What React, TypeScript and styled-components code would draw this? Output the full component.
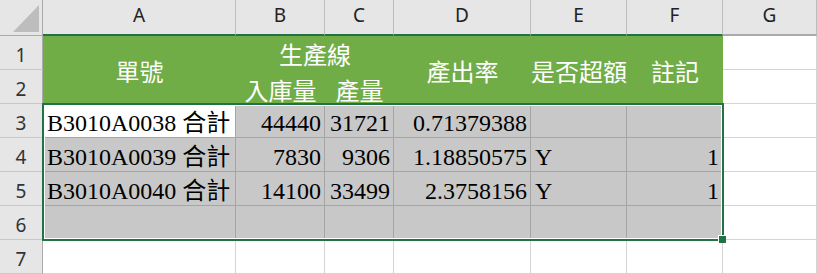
import React from 'react'
import styled, { createGlobalStyle } from 'styled-components'

const GREEN = '#70ad47'
const DARK = '#217346'
const GRID = '#d4d4d4'
const SHADE = '#c8c8c8'
const SHADE_LINE = '#a5a5a5'
const HEAD_BG = '#e6e6e6'

const GlobalStyle = createGlobalStyle`
  html, body {
    margin: 0;
    padding: 0;
    background: #fff;
    overflow: hidden;
  }
`

const Sheet = styled.div`
  display: grid;
  grid-template-columns: 43px 193px 89px 69px 137px 96px 96px 1fr;
  grid-template-rows: 36px repeat(7, 34px);
  width: 817px;
  height: 274px;
  overflow: hidden;
  font-family: "Liberation Serif", "Noto Sans CJK TC", serif;
`

const Corner = styled.div`
  grid-column: 1;
  grid-row: 1;
  box-sizing: border-box;
  background: ${HEAD_BG};
  border-right: 1px solid #ababab;
  border-bottom: 1px solid #ababab;
`

const ColHead = styled.div<{ $c: number; $sel?: boolean }>`
  grid-column: ${p => p.$c};
  grid-row: 1;
  box-sizing: border-box;
  display: flex;
  align-items: center;
  justify-content: center;
  padding-bottom: 4px;
  background: ${HEAD_BG};
  border-right: 1px solid #bdbdbd;
  border-bottom: ${p => (p.$sel ? `2px solid ${DARK}` : '2px solid #ababab')};
  font-family: "Noto Sans", "Open Sans", sans-serif;
  font-size: 19px;
  color: #222;
`

const RowHead = styled.div<{ $r: number }>`
  grid-column: 1;
  grid-row: ${p => p.$r};
  box-sizing: border-box;
  display: flex;
  align-items: center;
  justify-content: center;
  padding-top: 4px;
  background: ${HEAD_BG};
  border-right: 1px solid #ababab;
  border-bottom: 1px solid #c8c8c8;
  font-family: "Noto Sans", "Open Sans", sans-serif;
  font-size: 19px;
  color: #333;
`

const Title = styled.div<{ $col: string; $row: string; $low?: boolean }>`
  grid-column: ${p => p.$col};
  grid-row: ${p => p.$row};
  display: flex;
  align-items: center;
  justify-content: center;
  padding-top: ${p => (p.$low ? '5px' : '1px')};
  background: ${GREEN};
  color: #fff;
  font-family: "Noto Sans CJK TC", sans-serif;
  font-size: 24px;
  line-height: 24px;
  white-space: nowrap;
`

type Tone = 'plain' | 'shade' | 'active'

const Cell = styled.div<{ $r: number; $c: number; $tone: Tone; $right?: boolean }>`
  grid-column: ${p => p.$c};
  grid-row: ${p => p.$r};
  box-sizing: border-box;
  display: flex;
  align-items: flex-end;
  justify-content: ${p => (p.$right ? 'flex-end' : 'flex-start')};
  padding: 0 3px 2px 4px;
  background: ${p => (p.$tone === 'shade' ? SHADE : '#fff')};
  border-right: 1px solid ${p => (p.$tone === 'plain' ? GRID : SHADE_LINE)};
  border-bottom: 1px solid ${p => (p.$tone === 'plain' ? GRID : SHADE_LINE)};
  font-size: 24px;
  line-height: 24px;
  color: #000;
  white-space: nowrap;
`

const Selection = styled.div`
  grid-column: 2 / 8;
  grid-row: 4 / 8;
  margin: -1px;
  position: relative;
  z-index: 2;
  border: 2px solid ${DARK};
  box-shadow: inset 0 0 0 1px #fff;
  pointer-events: none;
`

const Handle = styled.div`
  position: absolute;
  right: -4px;
  bottom: -4px;
  width: 7px;
  height: 7px;
  background: ${DARK};
  border: 1px solid #fff;
  border-right: none;
  border-bottom: none;
`

const CornerMark = () => (
  <svg width="42" height="35" viewBox="0 0 42 35">
    <polygon points="39,5 39,32 13,32" fill="#bdbdbd" />
  </svg>
)

const letters = ['A', 'B', 'C', 'D', 'E', 'F', 'G']

const rows: string[][] = [
  ['B3010A0038 合計', '44440', '31721', '0.71379388', '', ''],
  ['B3010A0039 合計', '7830', '9306', '1.18850575', 'Y', '1'],
  ['B3010A0040 合計', '14100', '33499', '2.3758156', 'Y', '1'],
  ['', '', '', '', '', ''],
]

const rightCols = [1, 2, 3, 5]

export default function App() {
  return (
    <>
      <GlobalStyle />
      <Sheet>
        <Corner>
          <CornerMark />
        </Corner>
        {letters.map((l, i) => (
          <ColHead key={l} $c={i + 2} $sel={l !== 'G'}>
            {l}
          </ColHead>
        ))}

        <RowHead $r={2}>1</RowHead>
        <Title $col="2" $row="2 / 4">單號</Title>
        <Title $col="3 / 5" $row="2">生產線</Title>
        <Title $col="5" $row="2 / 4">產出率</Title>
        <Title $col="6" $row="2 / 4">是否超額</Title>
        <Title $col="7" $row="2 / 4">註記</Title>
        <Cell $r={2} $c={8} $tone="plain" />

        <RowHead $r={3}>2</RowHead>
        <Title $col="3" $row="3" $low>入庫量</Title>
        <Title $col="4" $row="3" $low>產量</Title>
        <Cell $r={3} $c={8} $tone="plain" />

        {rows.map((r, i) => (
          <React.Fragment key={i}>
            <RowHead $r={i + 4}>{i + 3}</RowHead>
            {r.map((v, j) => (
              <Cell
                key={j}
                $r={i + 4}
                $c={j + 2}
                $tone={i === 0 && j === 0 ? 'active' : 'shade'}
                $right={rightCols.includes(j)}
              >
                {v}
              </Cell>
            ))}
            <Cell $r={i + 4} $c={8} $tone="plain" />
          </React.Fragment>
        ))}

        <RowHead $r={8}>7</RowHead>
        {letters.map((l, i) => (
          <Cell key={l} $r={8} $c={i + 2} $tone="plain" />
        ))}

        <Selection>
          <Handle />
        </Selection>
      </Sheet>
    </>
  )
}
